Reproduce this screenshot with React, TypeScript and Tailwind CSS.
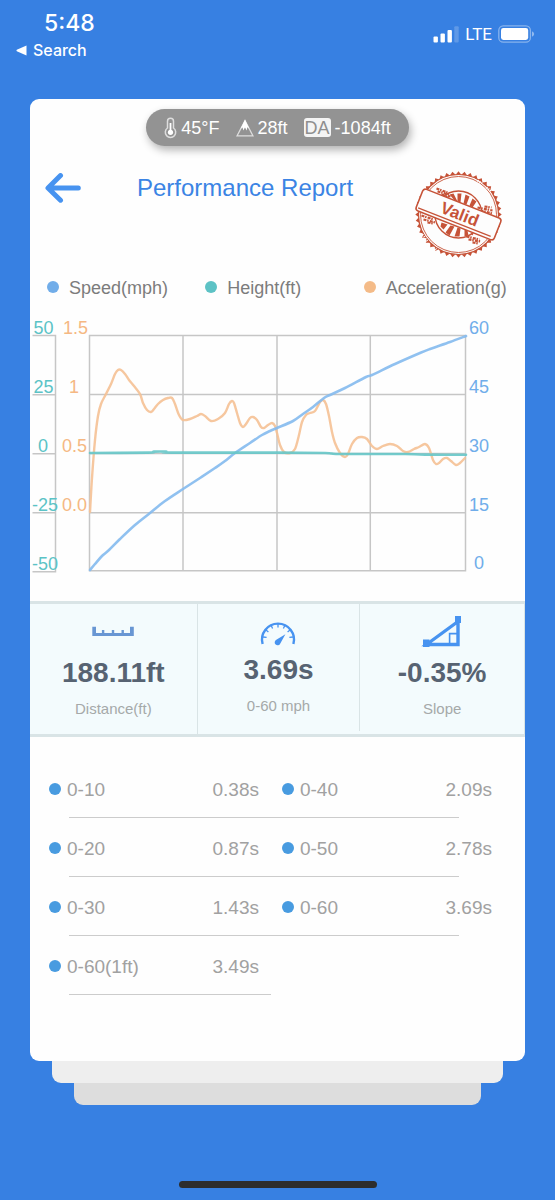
import React from "react";

type Point = [number, number];

const ACCELERATION: Point[] = [
  [90, 512], [92, 478], [95, 440], [98, 416], [101, 404], [106, 394], [111, 384], [115, 374], [118, 370], [121, 370],
  [125, 374], [129, 380], [134, 386], [140, 394], [143, 403], [147, 410], [151, 412], [154, 409],
  [158, 404], [163, 400], [168, 398], [172, 398], [175, 404], [179, 415], [183, 420], [190, 419],
  [197, 416], [201, 414], [205, 416], [211, 421], [218, 419], [225, 413], [229, 404], [232, 401],
  [234, 403], [237, 413], [240, 423], [243, 427], [246, 424], [250, 418], [253, 417], [257, 420],
  [261, 427], [264, 428], [268, 425], [272, 423], [275, 426], [277, 433], [280, 445], [284, 452],
  [290, 453], [295, 449], [299, 435], [302, 422], [306, 415], [310, 413], [315, 411], [320, 402],
  [323, 400], [326, 404], [329, 416], [332, 432], [335, 443], [340, 453], [345, 457], [348, 454],
  [352, 444], [357, 438], [362, 437], [367, 439], [372, 446], [377, 449], [383, 446], [390, 444],
  [397, 446], [403, 451], [408, 452], [414, 449], [419, 447], [425, 444], [429, 448], [433, 460],
  [436, 464], [439, 463], [443, 459], [447, 458], [451, 461], [456, 465], [460, 463], [465, 458],
];

const SPEED: Point[] = [
  [90, 570], [95, 564], [102, 556], [109, 550], [120, 539], [135, 525], [150, 513], [165, 501],
  [183, 489], [200, 478], [215, 468], [225, 461], [235, 453], [250, 443], [262, 435], [270, 431],
  [277, 428], [293, 421], [303, 414], [313, 407], [324, 398], [330, 395], [345, 388], [366, 377],
  [372, 375], [395, 364], [420, 353], [430, 349], [450, 342], [466, 336],
];

const HEIGHT: Point[] = [
  [90, 453], [148, 452.6], [154, 451.6], [166, 451.6], [172, 452.6], [277, 452.6], [325, 453],
  [336, 454], [370, 454], [405, 454], [425, 454.6], [466, 454.8],
];

function smoothPath(points: Point[]): string {
  let d = `M${points[0][0]} ${points[0][1]}`;
  for (let i = 0; i < points.length - 1; i++) {
    const p0 = points[Math.max(i - 1, 0)];
    const p1 = points[i];
    const p2 = points[i + 1];
    const p3 = points[Math.min(i + 2, points.length - 1)];
    d += ` C${p1[0] + (p2[0] - p0[0]) / 6} ${p1[1] + (p2[1] - p0[1]) / 6} ${p2[0] - (p3[0] - p1[0]) / 6} ${
      p2[1] - (p3[1] - p1[1]) / 6
    } ${p2[0]} ${p2[1]}`;
  }
  return d;
}

function toothedRing(count: number, inner: number, outer: number): string {
  const parts: string[] = [];
  for (let i = 0; i < count * 2; i++) {
    const r = i % 2 ? inner : outer;
    const a = (Math.PI * i) / count;
    parts.push(`${(r * Math.cos(a)).toFixed(2)},${(r * Math.sin(a)).toFixed(2)}`);
  }
  return parts.join(" ");
}

function StatusBar() {
  return (
    <header className="flex h-[99px] items-start justify-between pl-4 pr-5 pt-[9px] text-white">
      <div className="flex flex-col">
        <span className="pl-7 font-[Inter,sans-serif] text-[23px] font-medium leading-[28px]">5:48</span>
        <a href="#search" className="flex items-center gap-[6px] font-[Inter,sans-serif] text-base font-medium leading-[26px]">
          <svg className="h-[11px] w-[11px]" viewBox="0 0 11 11" fill="currentColor" aria-hidden="true">
            <path d="M10.5 0.4V10.6L0.8 6.3Q0 5.5 0.8 4.7Z" />
          </svg>
          Search
        </a>
      </div>
      <div className="mt-[15px] flex h-[20px] items-center gap-[6px]">
        <svg className="h-[17px] w-[26px]" viewBox="0 0 26 17" fill="currentColor" aria-hidden="true">
          <rect x="0.5" y="10.5" width="4.4" height="6" rx="1" />
          <rect x="7.5" y="7.5" width="4.4" height="9" rx="1" />
          <rect x="14.5" y="4" width="4.4" height="12.5" rx="1" />
          <rect x="21.3" y="0.3" width="4.4" height="16.2" rx="1" opacity="0.2" />
        </svg>
        <span className="font-[Roboto,sans-serif] text-[17px] leading-[20px]">LTE</span>
        <svg className="h-[18px] w-[37px]" viewBox="0 0 37 18" aria-hidden="true">
          <rect x="0.8" y="0.8" width="31.6" height="16.4" rx="4.5" fill="none" stroke="white" strokeOpacity="0.4" strokeWidth="1.3" />
          <rect x="3" y="3" width="27.2" height="12" rx="2.4" fill="white" />
          <path d="M34 6.2Q36.2 7.2 36.2 9T34 11.8Z" fill="white" fillOpacity="0.45" />
        </svg>
      </div>
    </header>
  );
}

function ConditionsPill() {
  return (
    <div className="flex h-[37px] items-center gap-4 rounded-full bg-[#939393] px-[18px] text-lg leading-6 text-white shadow-[2px_4px_8px_rgba(0,0,0,0.3)]">
      <span className="flex items-center gap-1">
        <svg className="h-[22px] w-[13px]" viewBox="0 0 13 22" fill="none" stroke="#dedede" strokeWidth="1.5" aria-hidden="true">
          <path d="M3.5 11V4.2a3 3 0 0 1 6 0v6.8a5.2 5.2 0 1 1-6 0Z" />
          <path d="M6.5 6v8" stroke="white" strokeWidth="1.8" />
          <circle cx="6.5" cy="15.3" r="2.6" fill="white" stroke="none" />
        </svg>
        45°F
      </span>
      <span className="flex items-center gap-1">
        <svg className="h-[18px] w-[18px]" viewBox="0 0 18 18" aria-hidden="true">
          <path d="M9 1.6 17 16.9H1Z" fill="none" stroke="#dedede" strokeWidth="1.2" />
          <path d="M9 .6 13.3 9.8 11.3 8.2 10.7 11.4 9 8.6 7.2 11.4 6.6 8.4 4.6 9.8Z" fill="white" />
        </svg>
        28ft
      </span>
      <span className="flex items-center gap-1">
        <span className="flex h-[19px] items-center rounded-[3px] bg-[#f4f4f4] px-px text-[#8f8f8f]">DA</span>
        -1084ft
      </span>
    </div>
  );
}

function ValidStamp() {
  return (
    <svg className="ml-auto h-[88px] w-[89px] shrink-0" viewBox="-44.5 -43.5 89 88" role="img" aria-label="Valid stamp">
      <g fill="none" stroke="#c65338">
        <polygon points={toothedRing(44, 39.8, 43.2)} fill="#c65338" stroke="none" />
        <circle r="40" fill="#fdfdfd" strokeWidth="1.2" />
        <circle r="38" strokeWidth="0.9" />
        <circle r="23.5" strokeWidth="1.4" />
        <g fill="#c65338" stroke="none">
          <path d="M-9-20-5-21-1-13-4-14ZM-1-21H3L2-12-1-13ZM7-20 11-18 8-10 5-11ZM14-16 18-13 14-7 11-9ZM-15-16-12-19-8-15-10-14Z" />
          <path d="M-17 8-11 10-15 15-18 12ZM-8 11-4 12-9 21-13 18ZM-1 13 2 14 1 22H-4ZM6 15 9 16 10 21 6 22ZM12 18 15 19 14 21Z" />
        </g>
        <g strokeWidth="2.2" strokeDasharray="3 0.8 1.5 1.2">
          <path d="M-22-26-11-22M-21-23-9-20M-17-20-8-18" />
          <path d="M19-7 34-4M22-4 34-1M26-8 33-7" />
          <path d="M-37 1-25 5M-35 5-23 8M-31 8-25 9" />
          <path d="M8 22 21 25M10 25 22 27M14 28 20 29" />
        </g>
        <path d="M19-34 24-31M28-27 33-23" stroke="#fdfdfd" strokeWidth="2" strokeDasharray="1.2 1" />
        <path d="M-36 20-31 27M-25 33-19 37" stroke="#fdfdfd" strokeWidth="2" strokeDasharray="1 1.4" />
      </g>
      <g transform="rotate(21.5)">
        <rect x="-42" y="-11.6" width="84" height="23.2" rx="3" fill="#fdfdfd" stroke="#c65338" strokeWidth="1.5" />
        <path d="M-40 8.6H38" stroke="#c65338" strokeWidth="1.2" />
        <text x="1" y="5" textAnchor="middle" fill="#c65338" className="text-[17px] font-bold">
          Valid
        </text>
      </g>
    </svg>
  );
}

const LEGEND = [
  { label: "Speed(mph)", dot: "bg-[#71ade9]" },
  { label: "Height(ft)", dot: "bg-[#5dc2c5]" },
  { label: "Acceleration(g)", dot: "bg-[#f4bb88]" },
];

function Legend() {
  return (
    <ul className="mt-[17px] grid grid-cols-3 pl-[17px] pr-[3px] text-lg leading-6 text-[#7c7c7c]">
      {LEGEND.map((item) => (
        <li key={item.label} className="flex items-center gap-[10px]">
          <span className={`mb-[2px] size-3 shrink-0 rounded-full ${item.dot}`} />
          {item.label}
        </li>
      ))}
    </ul>
  );
}

function Chart() {
  return (
    <svg className="block w-full" viewBox="30 300 495 301" role="img" aria-label="Speed, height and acceleration over time">
      <g stroke="#c6c6c6" strokeWidth="1.5" fill="none">
        <path d="M89.5 335.5H465.5V570.8H89.5Z" />
        <path d="M89.5 394.5H465.5M89.5 453.5H465.5M89.5 512.7H465.5M183 335.5V570.8M277 335.5V570.8M370.3 335.5V570.8" />
        <path d="M32.5 335.5H55.5V571.8H32.5M32.5 394.7H55.5M32.5 453.7H55.5M32.5 512.7H55.5" />
      </g>
      <g fill="none" strokeLinejoin="round" strokeLinecap="round" strokeOpacity="0.9">
        <path d={smoothPath(ACCELERATION)} stroke="#f5c195" strokeWidth="2.4" />
        <path d={smoothPath(SPEED)} stroke="#84baee" strokeWidth="2.6" />
        <path d={smoothPath(HEIGHT)} stroke="#66c6c8" strokeWidth="2.6" />
      </g>
      <g className="text-lg" fill="#5bc3c6">
        <text x="33.5" y="333.5">50</text>
        <text x="33.5" y="392.5">25</text>
        <text x="38" y="451.5">0</text>
        <text x="32" y="510.5">-25</text>
        <text x="32" y="569.5">-50</text>
      </g>
      <g className="text-lg" fill="#f5b883">
        <text x="63" y="333.5">1.5</text>
        <text x="69" y="392.5">1</text>
        <text x="62" y="451.5">0.5</text>
        <text x="62" y="510.5">0.0</text>
      </g>
      <g className="text-lg" fill="#70adea">
        <text x="469" y="333.5">60</text>
        <text x="469" y="392.5">45</text>
        <text x="469" y="451.5">30</text>
        <text x="469" y="510.5">15</text>
        <text x="474" y="568.5">0</text>
      </g>
    </svg>
  );
}

function RulerIcon() {
  return (
    <svg className="h-[53px] w-12" viewBox="0 0 48 53" aria-hidden="true">
      <path d="M3.3 22.7H7V28.9H12.9V26H15.3V28.9H22.8V26H25.2V28.9H32.5V26H34.9V28.9H41V22.7H44.8V32H3.3Z" fill="#6896d3" />
    </svg>
  );
}

function GaugeIcon() {
  return (
    <svg className="h-[50px] w-12" viewBox="0 0 48 50" fill="none" stroke="#4793f0" aria-hidden="true">
      <path d="M8.6 40A16 16 0 1 1 39.4 40" strokeWidth="2.4" />
      <path d="M24 20V23.5M17.2 21.5 18.6 24.5M12 26 14.4 28M9 33 12.6 33.4M30.8 21.5 29.4 24.5M36 26 33.6 28M39 33 35.4 33.4" strokeWidth="1.3" />
      <path d="M31.4 30.3 26.3 39.4A2.9 2.9 0 1 1 22.3 35.8Z" fill="#4793f0" stroke="none" />
    </svg>
  );
}

function SlopeIcon() {
  return (
    <svg className="h-[53px] w-12" viewBox="0 0 48 53" fill="none" stroke="#4793f0" aria-hidden="true">
      <path d="M8.5 40.5 40 17.5V40.5Z" strokeWidth="3.4" />
      <path d="M31.6 40V29.6H40" strokeWidth="1.6" />
      <path d="M37 12H43V19H37ZM5 35.5H11.5V43H5Z" fill="#4793f0" stroke="none" />
    </svg>
  );
}

function Stat({ icon, value, label, className = "" }: { icon: React.ReactNode; value: string; label: string; className?: string }) {
  return (
    <div className={`flex flex-col items-center pb-[15px] ${className}`}>
      {icon}
      <strong className="text-[28px] font-bold leading-8 text-[#576372]">{value}</strong>
      <span className="mt-[10px] text-[15px] leading-5 text-[#a5a9a9]">{label}</span>
    </div>
  );
}

const SPLITS = [
  [["0-10", "0.38s"], ["0-40", "2.09s"]],
  [["0-20", "0.87s"], ["0-50", "2.78s"]],
  [["0-30", "1.43s"], ["0-60", "3.69s"]],
  [["0-60(1ft)", "3.49s"]],
];

function Splits() {
  return (
    <div className="pb-[66px] pl-[19px] pr-[33px] pt-[22px]">
      <table className="w-full table-fixed text-[19px] leading-6 text-[#a1a1a1]">
        <colgroup>
          <col className="w-[23.7%]" />
          <col className="w-[23.7%]" />
          <col className="w-[28.9%]" />
          <col className="w-[23.7%]" />
        </colgroup>
        <tbody>
          {SPLITS.map((row) => (
            <React.Fragment key={row[0][0]}>
              <tr className="h-[58px]">
                {row.map(([range, time], i) => (
                  <React.Fragment key={range}>
                    <th scope="row" className={`pt-1 text-left font-normal ${i ? "pl-[23px]" : ""}`}>
                      <span className="flex items-center gap-[6px]">
                        <span className="mb-[2px] size-3 shrink-0 rounded-full bg-[#489be0]" />
                        {range}
                      </span>
                    </th>
                    <td className="pt-1 text-right">{time}</td>
                  </React.Fragment>
                ))}
              </tr>
              <tr aria-hidden="true">
                <td colSpan={4}>
                  <div className={row.length > 1 ? "ml-5 mr-[33px] h-px bg-[#cccccc]" : "ml-5 h-px w-[45.5%] bg-[#cccccc]"} />
                </td>
              </tr>
            </React.Fragment>
          ))}
        </tbody>
      </table>
    </div>
  );
}

export default function App() {
  return (
    <div className="flex min-h-screen flex-col bg-[#3780e2] font-['Liberation_Sans',Arial,sans-serif]">
      <StatusBar />
      <main className="px-[30px]">
        <section className="overflow-hidden rounded-[9px] bg-[#fefefe]">
          <div className="flex justify-center pt-[10px]">
            <ConditionsPill />
          </div>
          <div className="mt-[25px] flex items-start pl-[15px] pr-[22px]">
            <button type="button" aria-label="Back" className="mt-[2px] shrink-0">
              <svg className="h-[30px] w-9" viewBox="0 0 36 30" fill="none" stroke="#4793f0" strokeWidth="5" strokeLinecap="round" strokeLinejoin="round">
                <path d="M15.5 2.6 3 15 15.5 27.2M4 15H33.3" />
              </svg>
            </button>
            <h1 className="ml-14 mt-[3px] whitespace-nowrap text-2xl leading-7 text-[#3b84e4]">Performance Report</h1>
            <ValidStamp />
          </div>
          <Legend />
          <Chart />
          <div className="grid grid-cols-[168fr_163fr_164fr] border-y-[3px] border-r border-[#d9e4e6] bg-[#f3fbfd]">
            <Stat icon={<RulerIcon />} value="188.11ft" label="Distance(ft)" className="border-r border-[#d9e4e6]" />
            <Stat icon={<GaugeIcon />} value="3.69s" label="0-60 mph" className="mb-[3px] border-r border-[#d9e4e6]" />
            <Stat icon={<SlopeIcon />} value="-0.35%" label="Slope" />
          </div>
          <Splits />
        </section>
        <div className="mx-[22px] h-[22px] rounded-b-[9px] bg-[#eeeeee]" />
        <div className="mx-11 h-[22px] rounded-b-[9px] bg-[#dddddd]" />
      </main>
      <div className="mx-auto mb-[12px] mt-auto h-[7px] w-[198px] rounded-full bg-[#2d2d2d]" />
    </div>
  );
}
